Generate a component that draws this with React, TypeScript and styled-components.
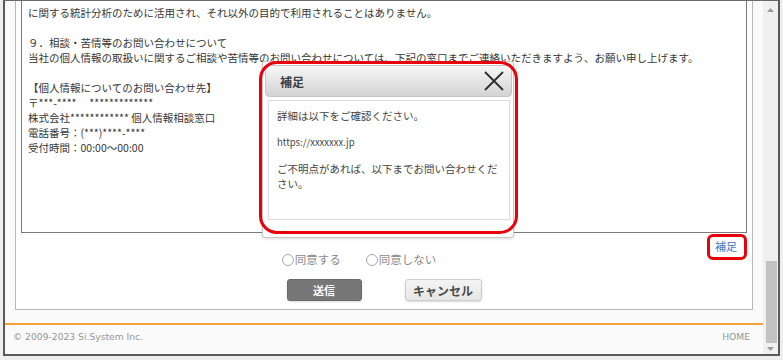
import React from 'react';
import styled, { createGlobalStyle } from 'styled-components';

const GlobalStyle = createGlobalStyle`
  html, body {
    margin: 0;
    padding: 0;
    background: #eeeeee;
  }
  * {
    box-sizing: border-box;
  }
`;

const JP = `"Noto Sans CJK JP", "Noto Sans", sans-serif`;

const Screen = styled.div`
  position: relative;
  width: 783px;
  height: 360px;
  overflow: hidden;
  background: #eeeeee;
  font-family: ${JP};
`;

const Frame = styled.div`
  display: flex;
  margin-left: 3px;
  width: 777px;
  height: 356px;
  border-top: 1px solid #6a6a6a;
  border-left: 2px solid #5a5a5a;
  border-right: 2px solid #5a5a5a;
  border-bottom: 2px solid #5a5a5a;
  background: #fafafa;
`;

const Page = styled.div`
  flex: 1;
  display: flex;
  flex-direction: column;
  background: #fafafa;
`;

const Panel = styled.div`
  margin: 0 10px;
  padding: 0 5px 8px;
  background: #ffffff;
  border: 1px solid #b9b9b9;
  border-top: none;
  display: flex;
  flex-direction: column;
`;

const TextBox = styled.div`
  height: 232px;
  padding: 4px 6px 0;
  border: 1px solid #7a7a7a;
  border-top: none;
  font-size: 10.5px;
  line-height: 15px;
  color: #363636;
  white-space: pre;
  overflow: hidden;
`;

const Line = styled.div`
  height: 15px;
`;

const LinkRow = styled.div`
  height: 20px;
  display: flex;
  justify-content: flex-end;
  padding: 7px 10px 0 0;
`;

const Link = styled.a`
  position: relative;
  font-size: 11px;
  line-height: 13px;
  color: #4677bd;
  text-decoration: none;
  &::after {
    content: '';
    position: absolute;
    top: -6px;
    bottom: -7px;
    left: -8px;
    right: -10px;
    border: 3px solid #e8000b;
    border-radius: 6px;
  }
`;

const RadioRow = styled.div`
  height: 13px;
  display: flex;
  justify-content: center;
  gap: 25px;
  padding-right: 50px;
`;

const RadioLabel = styled.label`
  display: flex;
  align-items: center;
  gap: 1px;
  font-size: 11.5px;
  line-height: 13px;
  color: #8a8a8a;
`;

const RadioCircle = styled.span`
  width: 12px;
  height: 12px;
  border-radius: 50%;
  border: 1px solid #a8a8a8;
  background: #ffffff;
`;

const ButtonRow = styled.div`
  margin-top: 13px;
  display: flex;
  justify-content: center;
  gap: 43px;
`;

const Button = styled.button<{ primary?: boolean }>`
  width: ${(p) => (p.primary ? '75px' : '77px')};
  height: 22px;
  padding: 0;
  border-radius: 3px;
  font-family: ${JP};
  font-weight: bold;
  font-size: ${(p) => (p.primary ? '11px' : '12px')};
  color: ${(p) => (p.primary ? '#ffffff' : '#4a4a4a')};
  background: ${(p) =>
    p.primary ? '#777777' : 'linear-gradient(#f4f4f4, #e6e6e6)'};
  border: 1px solid ${(p) => (p.primary ? '#6a6a6a' : '#cccccc')};
  box-shadow: 0 1px 2px rgba(0, 0, 0, 0.15);
`;

const Footer = styled.div`
  margin-top: 13px;
  height: 31px;
  border-top: 2px solid #f5a13a;
  display: flex;
  justify-content: space-between;
  padding: 6px 13px 0 8px;
  font-family: 'DejaVu Sans', Verdana, sans-serif;
  font-size: 9.2px;
  line-height: 11px;
  color: #969696;
`;

const Scrollbar = styled.div`
  width: 15px;
  display: flex;
  flex-direction: column;
  background: #f0f0f0;
`;

const ScrollButton = styled.div<{ h: number }>`
  height: ${(p) => p.h}px;
  display: flex;
  align-items: center;
  justify-content: center;
`;

const Track = styled.div`
  flex: 1;
  display: flex;
  flex-direction: column;
  justify-content: flex-end;
`;

const Thumb = styled.div`
  height: 82px;
  margin: 0 1px 0 3px;
  background: #c2c2c2;
`;

const Dialog = styled.div`
  position: absolute;
  left: 262px;
  top: 61px;
  width: 252px;
  height: 177px;
  padding: 3px 1px 0 2px;
  background: #ffffff;
  border: 1px solid #c8c8c8;
  border-radius: 3px;
  box-shadow: 0 1px 3px rgba(0, 0, 0, 0.15);
`;

const TitleBar = styled.div`
  height: 32px;
  display: flex;
  align-items: center;
  justify-content: space-between;
  padding: 0 6px 0 14px;
  border: 1px solid #c6c6c6;
  border-radius: 4px;
  background: linear-gradient(#f7f7f7, #d3d3d3);
`;

const Title = styled.span`
  font-size: 12px;
  font-weight: bold;
  color: #404040;
`;

const DialogBody = styled.div`
  height: 120px;
  margin: 3px 2px 0 3px;
  padding: 7px 8px 0;
  border: 1px solid #dcdcdc;
  font-size: 10.5px;
  line-height: 15px;
  color: #454545;
`;

const Para = styled.p<{ latin?: boolean }>`
  margin: 0 0 11.5px;
  font-size: ${(p) => (p.latin ? '9.5px' : '10.5px')};
`;

const DialogMark = styled.div`
  position: absolute;
  left: 259px;
  top: 61px;
  width: 259px;
  height: 173px;
  border: 3px solid #e8000b;
  border-radius: 18px;
  pointer-events: none;
`;

const textLines = [
  'に関する統計分析のために活用され、それ以外の目的で利用されることはありません。',
  '',
  '９．相談・苦情等のお問い合わせについて',
  '当社の個人情報の取扱いに関するご相談や苦情等のお問い合わせについては、下記の窓口までご連絡いただきますよう、お願い申し上げます。',
  '',
  '【個人情報についてのお問い合わせ先】',
  '〒***-****　 *************',
  '株式会社************ 個人情報相談窓口',
  '電話番号：(***)****-****',
  '受付時間：00:00～00:00',
];

const App: React.FC = () => {
  return (
    <Screen>
      <GlobalStyle />
      <Frame>
        <Page>
          <Panel>
            <TextBox>
              {textLines.map((t, i) => (
                <Line key={i}>{t}</Line>
              ))}
            </TextBox>
            <LinkRow>
              <Link href="#">補足</Link>
            </LinkRow>
            <RadioRow>
              <RadioLabel>
                <RadioCircle />
                同意する
              </RadioLabel>
              <RadioLabel>
                <RadioCircle />
                同意しない
              </RadioLabel>
            </RadioRow>
            <ButtonRow>
              <Button primary>送信</Button>
              <Button>キャンセル</Button>
            </ButtonRow>
          </Panel>
          <Footer>
            <span>© 2009-2023 Si.System Inc.</span>
            <span>HOME</span>
          </Footer>
        </Page>
        <Scrollbar>
          <ScrollButton h={18}>
            <svg width="7" height="4" viewBox="0 0 7 4">
              <path d="M0 4 L3.5 0 L7 4 Z" fill="#9a9a9a" />
            </svg>
          </ScrollButton>
          <Track>
            <Thumb />
          </Track>
          <ScrollButton h={11}>
            <svg width="7" height="4" viewBox="0 0 7 4">
              <path d="M0 0 L3.5 4 L7 0 Z" fill="#9a9a9a" />
            </svg>
          </ScrollButton>
        </Scrollbar>
      </Frame>
      <Dialog>
        <TitleBar>
          <Title>補足</Title>
          <svg width="22" height="22" viewBox="0 0 22 22">
            <path d="M2 2 L20 20 M20 2 L2 20" stroke="#2e2e2e" strokeWidth="1.8" />
          </svg>
        </TitleBar>
        <DialogBody>
          <Para>詳細は以下をご確認ください。</Para>
          <Para latin>https://xxxxxxx.jp</Para>
          <Para>ご不明点があれば、以下までお問い合わせください。</Para>
        </DialogBody>
      </Dialog>
      <DialogMark />
    </Screen>
  );
};

export default App;
